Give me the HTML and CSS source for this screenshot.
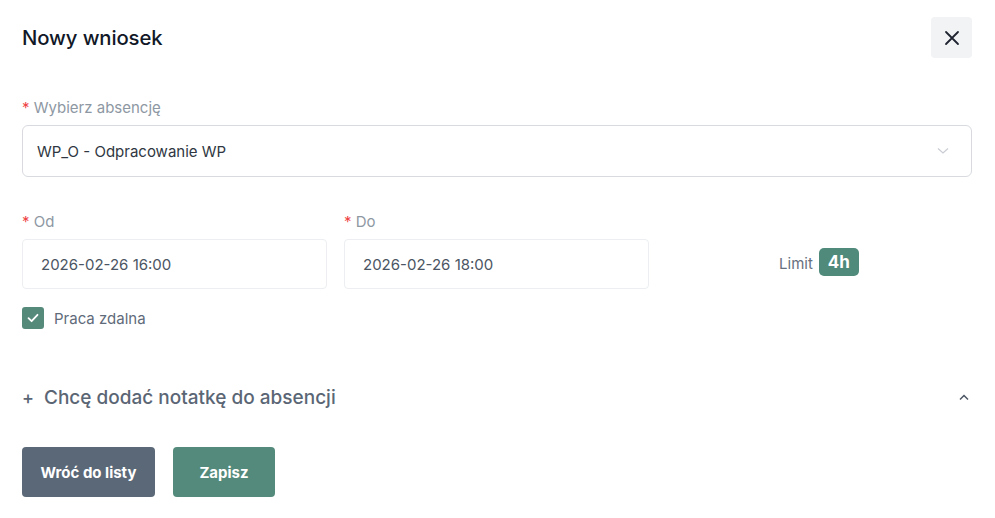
FILE: index.html
```html
<!DOCTYPE html>
<html lang="pl">
<head>
<meta charset="utf-8">
<title>Nowy wniosek</title>
<link rel="stylesheet" href="styles.css">
</head>
<body>
<div class="modal">
  <div class="header">
    <h1 class="title">Nowy wniosek</h1>
    <button class="close" aria-label="Zamknij">
      <svg width="16" height="16" viewBox="0 0 16 16"><path d="M2 2L14 14M14 2L2 14" stroke="#1f2430" stroke-width="1.8" stroke-linecap="round"/></svg>
    </button>
  </div>

  <div class="field field-select">
    <label class="label"><span class="req">*</span> Wybierz absencję</label>
    <div class="select">
      <span>WP_O - Odpracowanie WP</span>
      <svg width="12" height="8" viewBox="0 0 12 8"><path d="M1 1.5L6 6L11 1.5" fill="none" stroke="#c9ccd2" stroke-width="1.2"/></svg>
    </div>
  </div>

  <div class="dates">
    <div class="field">
      <label class="label"><span class="req">*</span> Od</label>
      <div class="input">2026-02-26 16:00</div>
    </div>
    <div class="field">
      <label class="label"><span class="req">*</span> Do</label>
      <div class="input">2026-02-26 18:00</div>
    </div>
    <div class="field">
      <div class="label label-empty">&nbsp;</div>
      <div class="limit"><span class="limit-text">Limit</span><span class="badge">4h</span></div>
    </div>
  </div>

  <div class="check-row">
    <span class="checkbox">
      <svg width="14" height="14" viewBox="0 0 14 14"><path d="M2.5 7.2L5.6 10.2L11.5 3.8" fill="none" stroke="#fff" stroke-width="1.8" stroke-linecap="round" stroke-linejoin="round"/></svg>
    </span>
    <span class="check-label">Praca zdalna</span>
  </div>

  <div class="note">
    <div class="note-title"><span class="plus">+</span>Chcę dodać notatkę do absencji</div>
    <svg width="12" height="8" viewBox="0 0 12 8"><path d="M2 6.5L6 2.5L10 6.5" fill="none" stroke="#4b5563" stroke-width="1.5"/></svg>
  </div>

  <div class="actions">
    <button class="btn btn-gray">Wróć do listy</button>
    <button class="btn btn-green">Zapisz</button>
  </div>
</div>
</body>
</html>
```

FILE: styles.css
```css
* { box-sizing: border-box; }
html, body { margin: 0; padding: 0; background: #fff; }
body { font-family: Inter, "Noto Sans", sans-serif; color: #111827; }

.modal { width: 995px; padding: 17px 23px 0 22px; }

.header { display: flex; justify-content: space-between; align-items: center; height: 41px; }
.title { margin: 0; font-size: 20.3px; font-weight: 500; color: #111827; letter-spacing: -0.1px; }
.close { width: 41px; height: 41px; border: 0; border-radius: 4px; background: #f2f3f5; display: flex; align-items: center; justify-content: center; padding: 0; }

.field { display: flex; flex-direction: column; }
.field-select { margin-top: 41px; }
.label { font-size: 15px; color: #8e98a3; height: 17px; line-height: 17px; margin-bottom: 9px; }
.req { color: #ef4444; }

.select { height: 52px; border: 1px solid #d8dadf; border-radius: 6px; display: flex; align-items: center; justify-content: space-between; padding: 0 22px 0 14px; font-size: 15px; color: #2f3742; }

.dates { display: grid; grid-template-columns: 305px 305px 1fr; column-gap: 17px; margin-top: 36px; }
.input { height: 50px; border: 1px solid #eceef1; border-radius: 4px; display: flex; align-items: center; padding: 0 18px; font-size: 15px; color: #4b5563; }
.limit { height: 50px; display: flex; align-items: center; justify-content: center; gap: 6px; padding-bottom: 4px; }
.limit-text { font-size: 15px; color: #66707e; margin-top: 3px; }
.badge { width: 40px; height: 28px; border-radius: 5px; background: #4f8a7b; color: #fff; font-weight: 700; font-size: 17px; display: flex; align-items: center; justify-content: center; }

.check-row { display: flex; align-items: center; gap: 10px; margin-top: 18px; height: 22px; }
.checkbox { width: 22px; height: 22px; border-radius: 3px; background: #558a7b; display: flex; align-items: center; justify-content: center; }
.check-label { font-size: 15px; color: #5f6b7a; }

.note { display: flex; align-items: center; justify-content: space-between; margin-top: 54px; height: 28px; padding-right: 2px; }
.note-title { font-size: 19px; font-weight: 500; color: #5b6675; display: flex; align-items: center; }
.plus { font-size: 18px; font-weight: 500; width: 22px; }

.actions { display: flex; gap: 18px; margin-top: 36px; }
.btn { height: 50px; border: 0; border-radius: 4px; color: #fff; font-family: Inter, "Noto Sans", sans-serif; font-size: 15px; font-weight: 700; padding: 0; }
.btn-gray { width: 133px; background: #5b6877; }
.btn-green { width: 102px; background: #548a7b; }
```
